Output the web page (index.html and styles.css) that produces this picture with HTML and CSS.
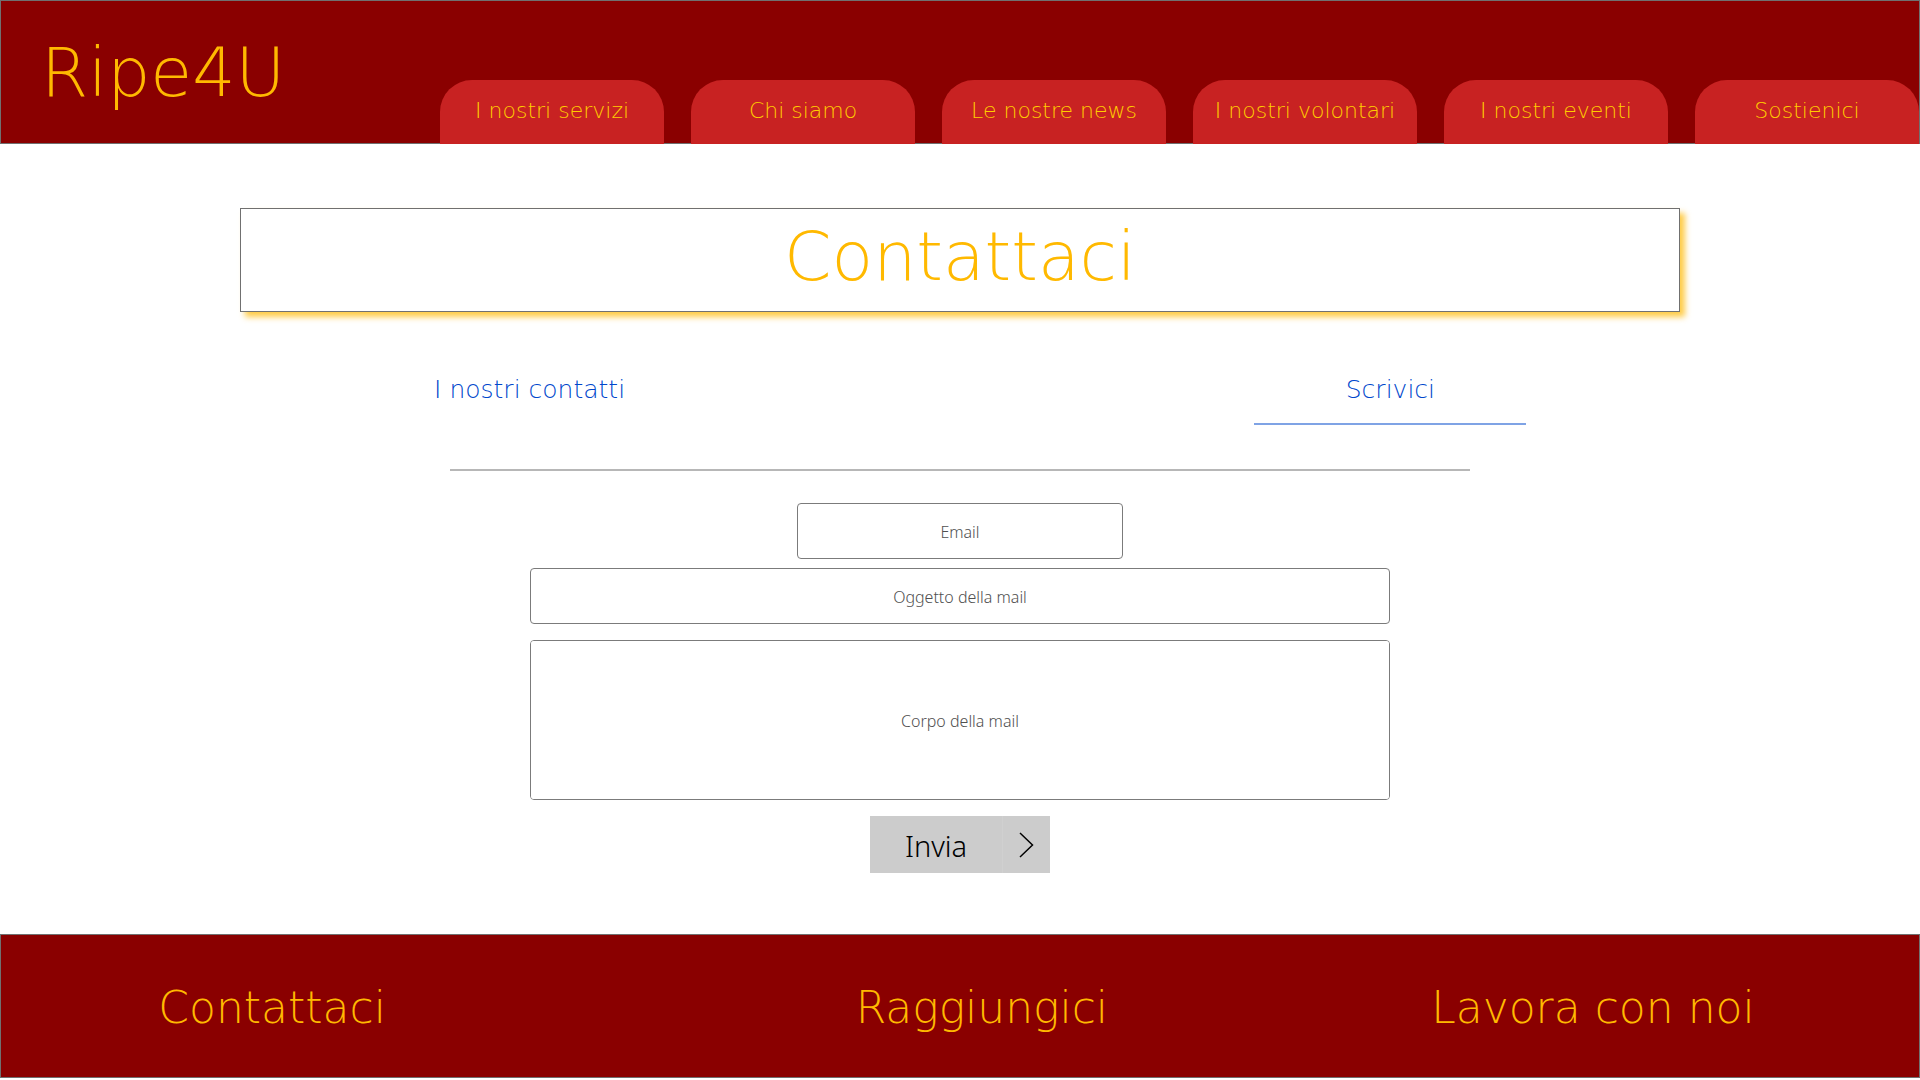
FILE: index.html
```html
<!DOCTYPE html>
<html lang="it">
<head>
<meta charset="utf-8">
<meta name="viewport" content="width=device-width, initial-scale=1">
<title>Ripe4U - Contattaci</title>
<link rel="stylesheet" href="styles.css">
</head>
<body>
<header class="site-header">
  <a class="logo" href="#">Ripe4U</a>
  <nav class="main-nav">
    <a class="nav-tab" href="#">I nostri servizi</a>
    <a class="nav-tab" href="#">Chi siamo</a>
    <a class="nav-tab" href="#">Le nostre news</a>
    <a class="nav-tab" href="#">I nostri volontari</a>
    <a class="nav-tab" href="#">I nostri eventi</a>
    <a class="nav-tab" href="#">Sostienici</a>
  </nav>
</header>
<main class="content">
  <h1 class="page-title">Contattaci</h1>
  <nav class="switcher">
    <a class="switch" href="#">I nostri contatti</a>
    <a class="switch switch-active" href="#">Scrivici</a>
  </nav>
  <hr class="divider">
  <form class="mail-form">
    <input class="field field-email" type="email" placeholder="Email" aria-label="Email">
    <input class="field field-subject" type="text" placeholder="Oggetto della mail" aria-label="Oggetto della mail">
    <textarea class="field field-body" placeholder="Corpo della mail" aria-label="Corpo della mail"></textarea>
    <button class="send" type="submit">
      <span class="send-label">Invia</span>
      <span class="send-arrow"><svg width="16" height="26" viewBox="0 0 16 26" fill="none" stroke="#000" stroke-width="1.5" aria-hidden="true"><path d="M1 1 13.500 13 1 25"/></svg></span>
    </button>
  </form>
</main>
<footer class="site-footer">
  <a class="footer-link" href="#">Contattaci</a>
  <a class="footer-link" href="#">Raggiungici</a>
  <a class="footer-link" href="#">Lavora con noi</a>
</footer>
</body>
</html>
```
FILE: styles.css
```css
* {
  box-sizing: border-box;
}

body {
  margin: 0;
  background: #fff;
  font-family: "DejaVu Sans", sans-serif;
  font-weight: 200;
}

a {
  color: inherit;
  text-decoration: none;
}

.site-header {
  display: flex;
  justify-content: space-between;
  align-items: flex-end;
  height: 144px;
  padding-left: 40px;
  background: linear-gradient(#707070, #707070) bottom / 100% 1px no-repeat #8a0000;
  border: 1px solid #707070;
  border-bottom: 0;
  color: #ffb900;
}

.logo {
  align-self: center;
  font-size: 68px;
  line-height: 80px;
}

.main-nav {
  display: grid;
  grid-template-columns: repeat(6, 1fr);
  gap: 27px;
  flex: 0 0 78.75%;
}

.nav-tab {
  height: 64px;
  border-radius: 32px 32px 0 0;
  background: #c82222;
  color: #ffcd00;
  font-size: 22px;
  line-height: 62px;
  text-align: center;
  white-space: nowrap;
}

.content {
  display: flex;
  flex-direction: column;
  align-items: center;
  padding: 64px 0 61px;
}

.page-title {
  width: 75%;
  margin: 0;
  padding-bottom: 6px;
  border: 1px solid #707070;
  box-shadow: 5px 5px 6px #ffb900b8;
  color: #ffb900;
  font-size: 68px;
  font-weight: 200;
  line-height: 96px;
  text-align: center;
}

.switcher {
  display: flex;
  justify-content: space-between;
  width: 59%;
  margin-top: 40px;
}

.switch {
  width: 272px;
  padding: 17px 0 13px;
  border-bottom: 2px solid transparent;
  color: #0047cc;
  font-size: 25px;
  line-height: 41px;
  text-align: center;
}

.switch-active {
  border-color: #7fa3e5;
}

.divider {
  width: 1020px;
  max-width: 100%;
  height: 2px;
  margin: 44px 0 32px;
  border: 0;
  background: #b7b7b7;
}

.mail-form {
  display: flex;
  flex-direction: column;
  align-items: center;
  gap: 16px;
  width: 860px;
  max-width: 100%;
}

.field {
  width: 100%;
  height: 56px;
  margin: 0;
  padding: 2px 16px 0;
  border: 1px solid #7b7b7b;
  border-radius: 4px;
  background: #fff;
  color: #333;
  font: 300 16px/24px "Noto Sans", "Open Sans", sans-serif;
  text-align: center;
}

.field::placeholder {
  color: #505050;
  opacity: 1;
}

.field-email {
  width: 38%;
  margin-bottom: -7px;
}

.field-body {
  height: 160px;
  padding: 68px 16px;
  resize: none;
}

.send {
  display: flex;
  width: 180px;
  height: 57px;
  padding: 0;
  border: 0;
  background: #ccc;
  color: #000;
  font: 300 29px/60px "Noto Sans", "Open Sans", sans-serif;
}

.send-label {
  flex: 1;
  text-align: center;
}

.send-arrow {
  display: flex;
  align-items: center;
  justify-content: center;
  width: 48px;
  height: 57px;
  border-left: 1px solid #d0d0d0;
}

.site-footer {
  display: grid;
  grid-template-columns: 544fr 880fr 346fr;
  align-items: center;
  height: 144px;
  margin-bottom: 2px;
  padding: 4px 8% 0 0;
  border: 1px solid #707070;
  background: #8a0000;
  color: #ffb900;
  font-size: 44px;
  line-height: 56px;
  text-align: center;
  white-space: nowrap;
}
```
